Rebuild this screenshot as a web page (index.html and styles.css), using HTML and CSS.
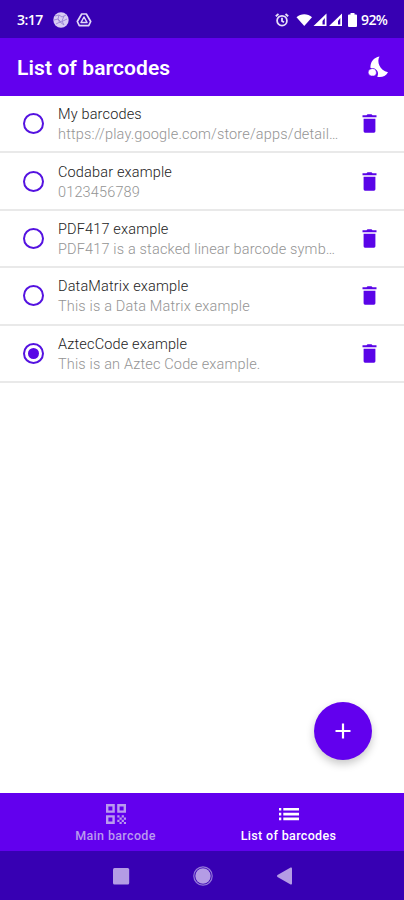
FILE: index.html
```html
<!DOCTYPE html>
<html lang="en">
<head>
  <meta charset="UTF-8">
  <meta name="viewport" content="width=device-width, initial-scale=1.0">
  <title>List of barcodes</title>
  <link rel="stylesheet" href="styles.css">
</head>
<body>
  <svg class="symbols">
    <symbol id="trash" viewBox="0 0 14 19">
      <path d="M1.100 4.800h11.800v12.500a1.400 1.400 0 0 1-1.400 1.400h-9a1.400 1.400 0 0 1-1.400-1.400zM0 1.300h4L5 .3h4l1 1h4v2H0z"/>
    </symbol>
  </svg>
  <div class="status-bar">
    <span class="time">3:17</span>
    <svg class="ball" width="18" height="18" viewBox="0 0 18 18">
      <circle cx="9" cy="9" r="7.700" fill="#d8cdf3"/>
      <path d="M3 5l4-1 3 2 4-2M2 9l4-1 3 3 6-3M4 13l4-2 4 3M7 4l-1 4 2 4M12 5l-2 5 2 4" fill="none" stroke="#9a83d6" stroke-width=".9"/>
    </svg>
    <svg class="drive" width="16" height="16" viewBox="0 0 16 16" fill="none" stroke="#e0d8f7" stroke-width="1.700" stroke-linejoin="round">
      <path d="M5.700 2h4.600l4.400 7.500-2 4.200H3.300l-2-4.200z"/>
      <path d="M8 5l3 5.500H5z" stroke-width="1.500"/>
    </svg>
    <div class="status-right">
      <svg class="alarm" width="14" height="14" viewBox="0 0 14 14" fill="none" stroke="#e6dff8" stroke-width="1.800">
        <circle cx="7" cy="7.700" r="4.900"/>
        <path d="M.8 3.300L3.500 1M13.200 3.300L10.500 1M7 4.700v3.200l2 1.300"/>
      </svg>
      <svg class="signals" width="47" height="14" viewBox="0 0 47 14" fill="#fff">
        <path d="M.5 4.200C4.500.3 12 .3 16 4.200L8.250 13z"/>
        <path fill-rule="evenodd" d="M30.500.6V13H17.500zM28.800 5l-2.300 3v3.500h2.300z"/>
        <path fill-rule="evenodd" d="M46 .6V13H33zM44.300 5l-2.300 3v3.500h2.300z"/>
      </svg>
      <svg class="battery" width="9" height="14" viewBox="0 0 9 14" fill="#fff">
        <path d="M2.500 0h4v1.500H8a1 1 0 0 1 1 1V13a1 1 0 0 1-1 1H1a1 1 0 0 1-1-1V2.500a1 1 0 0 1 1-1h1.500z"/>
      </svg>
      <span class="percent">92%</span>
    </div>
  </div>

  <header class="app-bar">
    <h1>List of barcodes</h1>
    <svg class="night" width="22" height="22" viewBox="0 0 22 22" fill="#fff">
      <path d="M12.500.4C9.500 5.500 12.500 14.300 21 16.300c-2.300 4.200-6.800 5.500-10.800 4.500 1.600-3 .8-6-1.600-7.500-1.500-1-3.300-1.400-5.100-1.200C3 6 6.600 1.500 12.500.4z"/>
      <path class="cloud" d="M4.200 19.900a3.600 3.600 0 0 1-.4-7c2.300-1 5 0 5.400 2.500.8 2.300-.8 4.500-2.700 4.500z"/>
    </svg>
  </header>

  <main class="content">
    <ul class="barcodes">
      <li>
        <span class="radio"></span>
        <div class="text"><div class="name">My barcodes</div><div class="value">https://play.google.com/store/apps/detail…</div></div>
        <svg class="trash"><use href="#trash"/></svg>
      </li>
      <li>
        <span class="radio"></span>
        <div class="text"><div class="name">Codabar example</div><div class="value">0123456789</div></div>
        <svg class="trash"><use href="#trash"/></svg>
      </li>
      <li>
        <span class="radio"></span>
        <div class="text"><div class="name">PDF417 example</div><div class="value">PDF417 is a stacked linear barcode symb…</div></div>
        <svg class="trash"><use href="#trash"/></svg>
      </li>
      <li>
        <span class="radio"></span>
        <div class="text"><div class="name">DataMatrix example</div><div class="value">This is a Data Matrix example</div></div>
        <svg class="trash"><use href="#trash"/></svg>
      </li>
      <li>
        <span class="radio checked"></span>
        <div class="text"><div class="name">AztecCode example</div><div class="value">This is an Aztec Code example.</div></div>
        <svg class="trash"><use href="#trash"/></svg>
      </li>
    </ul>
    <div class="fab">
      <svg width="16" height="16" viewBox="0 0 16 16" fill="none" stroke="#fff" stroke-width="2.200">
        <path d="M8 .5v15M.5 8h15"/>
      </svg>
    </div>
  </main>

  <nav class="tabs">
    <div class="tab">
      <svg width="20" height="20" viewBox="0 0 20 20" fill="none" stroke="currentColor" stroke-width="2.400">
        <path d="M1.200 1.200h6.400v6.400H1.200zM12.400 1.200h6.400v6.400h-6.400zM1.200 12.400h6.400v6.400H1.200z"/>
        <path fill="currentColor" stroke="none" d="M11.300 11.300h2.200v2.200h-2.200zM15.700 11.300h2.200v2.200h-2.200zM13.500 13.500h2.200v2.200h-2.200zM17.900 13.500H20v2.200h-2.100zM11.300 15.700h2.200v2.200h-2.200zM15.700 15.700h2.200v2.200h-2.200zM13.500 17.900h2.200V20h-2.200zM17.900 17.900H20V20h-2.100z"/>
      </svg>
      <span>Main barcode</span>
    </div>
    <div class="tab active">
      <svg width="20" height="20" viewBox="0 0 20 20" fill="currentColor">
        <path d="M0 4h2.300v2.600H0zM0 8.800h2.300v2.600H0zM0 13.600h2.300v2.600H0zM4.300 4H20v2.600H4.300zM4.300 8.800H20v2.600H4.300zM4.300 13.600H20v2.600H4.300z"/>
      </svg>
      <span>List of barcodes</span>
    </div>
  </nav>

  <div class="system-nav">
    <svg width="20" height="20" viewBox="0 0 20 20"><rect x="2" y="2" width="16.200" height="16.500" rx="1.500"/></svg>
    <svg width="20" height="20" viewBox="0 0 20 20"><circle cx="10" cy="10" r="7.700"/><circle cx="10" cy="10" r="9.200" fill="none" stroke="#9478d8" stroke-width="1.200"/></svg>
    <svg width="20" height="20" viewBox="0 0 20 20"><path d="M17 2.500v15a1 1 0 0 1-1.400.9L2.500 11q-1.200-1 0-2L15.600 1.600a1 1 0 0 1 1.400.9z"/></svg>
  </div>
</body>
</html>
```
FILE: styles.css
```css
* {
  box-sizing: border-box;
}
body {
  margin: 0;
  height: 900px;
  display: flex;
  flex-direction: column;
  font-family: Roboto, sans-serif;
  background: #fff;
  overflow: hidden;
}
svg {
  display: block;
  flex-shrink: 0;
}
.symbols {
  display: none;
}
.status-bar {
  height: 38px;
  padding: 1px 15px 0 17px;
  display: flex;
  align-items: center;
  background: #3700b3;
  color: #fff;
  font-family: "Open Sans", sans-serif;
  font-size: 14px;
  font-weight: 600;
}
.time {
  width: 35px;
  letter-spacing: -0.5px;
}
.drive {
  margin-left: 6px;
}
.status-right {
  margin-left: auto;
  display: flex;
  align-items: center;
}
.signals {
  margin-left: 7px;
}
.battery {
  margin: 0 4px 0 5px;
}
.percent {
  width: 28px;
  letter-spacing: -0.6px;
}
.app-bar {
  height: 57.500px;
  padding: 0 15px 0 17px;
  display: flex;
  align-items: center;
  justify-content: space-between;
  background: #6200ee;
  color: #fff;
}
.app-bar h1 {
  margin: 3px 0 0;
  font-size: 21px;
  font-weight: 600;
  letter-spacing: 0.1px;
}
.night {
  margin-top: 1px;
}
.cloud {
  stroke: #6200ee;
  stroke-width: 0.5px;
}
.content {
  flex: 1;
  position: relative;
}
.barcodes {
  margin: 0;
  padding: 0.500px 0 0;
  list-style: none;
}
.barcodes li {
  height: 57.400px;
  padding: 0 27px 0 23px;
  display: flex;
  align-items: center;
  border-bottom: 2px solid #e9e9e9;
}
.radio {
  width: 21px;
  height: 21px;
  padding: 3px;
  flex-shrink: 0;
  border: 2px solid #5412e0;
  border-radius: 50%;
}
.checked::before {
  content: "";
  display: block;
  width: 11px;
  height: 11px;
  border-radius: 50%;
  background: #5a08e6;
}
.text {
  flex: 1;
  padding-top: 3px;
  margin-left: 14px;
  font-size: 14.500px;
  font-weight: 300;
  letter-spacing: 0.160px;
  line-height: 20px;
  white-space: nowrap;
}
.name {
  color: #222;
}
.value {
  color: #949494;
}
.trash {
  width: 15px;
  height: 19px;
  fill: #5a04e8;
}
.fab {
  position: absolute;
  right: 32px;
  bottom: 33px;
  width: 58px;
  height: 58px;
  display: flex;
  align-items: center;
  justify-content: center;
  border-radius: 50%;
  background: #6200ee;
  box-shadow: 0 4px 8px rgba(0, 0, 0, 0.22);
}
.tabs {
  height: 58px;
  padding: 0 29px;
  display: flex;
  background: #6200ee;
}
.tab {
  flex: 1;
  padding-top: 11px;
  display: flex;
  flex-direction: column;
  align-items: center;
  color: #b99aee;
  font-size: 12.500px;
  font-weight: 500;
  letter-spacing: 0.35px;
}
.tab span {
  margin-top: 5px;
  line-height: 14px;
}
.tab.active {
  color: #fff;
}
.system-nav {
  height: 49px;
  padding: 0 109px 0 111px;
  display: flex;
  align-items: center;
  justify-content: space-between;
  background: #3700b3;
  fill: #b49ce5;
}
```
